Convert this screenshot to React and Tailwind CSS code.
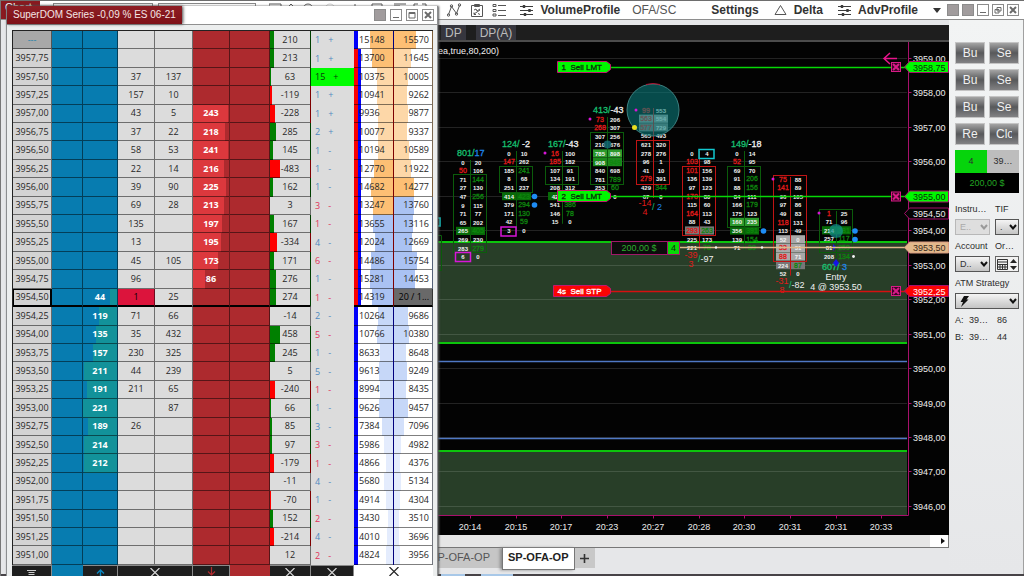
import React from "react";

/* ---------- SuperDOM data ---------- */
// price, bid, last bid, last ask, ask, delta, count, sign, tone, volume, session volume
const rows = [
  ["---", "", "", "", "", 210, "1", "+", "b", 15148, 15570],
  ["3957,75", "", "", "", "", 213, "1", "+", "b", 13700, 11645],
  ["3957,50", "", "37", "137", "", 63, "15", "+", "g", 10375, 10005],
  ["3957,25", "", "157", "10", "", -119, "1", "+", "b", 10941, 9262],
  ["3957,00", "", "43", "5", 243, -228, "1", "+", "b", 9936, 9877],
  ["3956,75", "", "37", "22", 218, 285, "2", "+", "b", 10077, 9337],
  ["3956,50", "", "58", "53", 241, 145, "1", "-", "b", 10194, 10589],
  ["3956,25", "", "22", "14", 216, -483, "1", "-", "b", 12770, 11922],
  ["3956,00", "", "39", "90", 225, 162, "1", "-", "b", 14682, 14277],
  ["3955,75", "", "69", "28", 213, 3, "3", "-", "r", 13247, 13760],
  ["3955,50", "", "135", "", 197, 167, "1", "-", "r", 13655, 13116],
  ["3955,25", "", "13", "", 195, -334, "4", "-", "b", 12024, 12669],
  ["3955,00", "", "45", "105", 173, 171, "6", "-", "r", 14486, 15754],
  ["3954,75", "", "96", "", 86, 276, "1", "-", "b", 15281, 14453],
  ["3954,50", 44, "1", "25", "", 274, "1", "-", "r", 14319, "20 / 1..."],
  ["3954,25", 119, "71", "66", "", -14, "2", "-", "b", 10264, 9686],
  ["3954,00", 135, "35", "432", "", 458, "5", "-", "r", 10766, 10380],
  ["3953,75", 157, "230", "325", "", 245, "1", "-", "b", 8633, 8648],
  ["3953,50", 211, "44", "239", "", 5, "5", "-", "b", 9613, 9249],
  ["3953,25", 191, "211", "65", "", -240, "1", "-", "r", 8994, 8435],
  ["3953,00", 221, "", "87", "", 66, "1", "-", "b", 9626, 9457],
  ["3952,75", 189, "26", "", "", 85, "3", "-", "b", 7384, 7096],
  ["3952,50", 214, "", "", "", 97, "3", "-", "r", 5986, 4982],
  ["3952,25", 212, "", "", "", -179, "1", "-", "r", 4866, 4376],
  ["3952,00", "", "", "", "", -11, "4", "-", "b", 5680, 5134],
  ["3951,75", "", "", "", "", -70, "1", "-", "b", 4914, 4304],
  ["3951,50", "", "", "", "", 152, "2", "-", "r", 3430, 3510],
  ["3951,25", "", "", "", "", -214, "4", "-", "b", 4010, 3696],
  ["3951,00", "", "", "", "", 12, "2", "-", "r", 4824, 3956],
];

const bar = (dir, color, w) =>
  `linear-gradient(to ${dir}, ${color} ${Math.round(w)}px, transparent ${Math.round(w)}px)`;

function tint(v, warm) {
  if (warm) return v > 12000 ? "#fdbf74" : "#fdd7a8";
  if (v > 12000) return "#aac2f3";
  return v > 9000 ? "#c6d7f8" : v > 7000 ? "#d3e0fa" : "#e4ecfd";
}

function stripes(i) {
  if (i === 0 || i > 14) return bar("right", "#0000fa", 4);
  return "linear-gradient(to right, #fa0000 4px, #0000fa 4px, #0000fa 7px, transparent 7px)";
}

function DomRow({ r, i }) {
  const [price, bid, lb, la, ask, delta, n, sign, tone, vol, vol2] = r;
  const last = i === 14;
  const edge = last ? "border-b border-b-black shadow-[inset_0_-1px_0_#000]" : "border-b border-b-black/50";
  const cell = `p-0 text-center border-r border-r-black/50 ${edge}`;
  const toneCls =
    tone === "g" ? "bg-[#00fd00] text-[#0a3a0a]" : tone === "r" ? "text-[#e0335a]" : "text-[#4f8ac0]";
  return (
    <tr>
      <td className={`p-0 text-center border-r border-b ${i === 0 ? "bg-[#a8a8a8] text-[#1d82a8]" : "bg-[#d3d3d3]"} ${last ? "border-black shadow-[inset_0_0_0_1px_#000]" : "border-black/50"}`}>{price}</td>
      <td className={`${cell} bg-[#077cb0]`}></td>
      <td
        className={`${cell} bg-[#077cb0] font-bold text-white`}
        style={{ backgroundImage: bid ? bar("left", "#12929a", bid * 0.155) : undefined }}
      >
        {bid}
      </td>
      <td className={`${cell} ${last ? "bg-[#dc143c] text-black" : ""}`}>{lb}</td>
      <td className={cell}>{la}</td>
      <td
        className={`${cell} bg-[#ad2a2e] font-bold text-white`}
        style={{ backgroundImage: ask ? bar("right", "#dc383d", ask * 0.145) : undefined }}
      >
        {ask}
      </td>
      <td className={`${cell} bg-[#ad2a2e]`}></td>
      <td
        className={cell}
        style={{ backgroundImage: bar("right", delta > 0 ? "#008000" : "#fe0000", Math.abs(delta) * 0.021) }}
      >
        {delta}
      </td>
      <td className={`p-0 ${toneCls}`}>
        <div className="flex gap-2 pl-1">
          <span>{n}</span>
          <span>{sign}</span>
        </div>
      </td>
      <td
        className={`${cell} bg-white pl-[5px] text-left`}
        style={{ backgroundImage: `${stripes(i)}, ${bar("left", tint(vol, i < 10), vol * 0.0015)}` }}
      >
        {vol}
      </td>
      <td
        className={`${cell} pr-[3px] text-right ${last ? "bg-[#696969] text-black" : "bg-white"}`}
        style={{ backgroundImage: last ? undefined : bar("right", tint(vol2, i < 9), vol2 * 0.00143) }}
      >
        {vol2}
      </td>
    </tr>
  );
}

function Cross({ color = "#d8d8d8" }) {
  return (
    <svg width="10" height="10" viewBox="0 0 10 10" className="mt-[2px] shrink-0">
      <path d="M.5 0l9 9M9.500 0l-9 9" stroke={color} strokeWidth="1.2" />
    </svg>
  );
}

function WinButton({ kind, label }) {
  return (
    <button aria-label={label} className={`flex size-3 items-center justify-center border border-[#8c8c8c] ${kind === "fill" ? "bg-[#a19c9d]" : "bg-white"}`}>
      <svg width="10" height="10" viewBox="0 0 10 10" fill="none" stroke="#6b6b6b" className="shrink-0">
        {kind === "min" && <path d="M2 7.500h6" />}
        {kind === "max" && <path d="M2 2.500h6v5.500h-6zM2 3.500h6" />}
        {kind === "restore" && <path d="M4 2.500h4v3.500h-4zM2 4.500h4v3.500h-4z" />}
        {kind === "close" && <path d="M2 2l6 6M8 2l-6 6" strokeWidth="2" />}
      </svg>
    </button>
  );
}

function SuperDom() {
  const foot = "flex justify-center overflow-hidden border-r border-t border-[#8a8a8a] bg-[#1e1e1e]";
  return (
    <section className="absolute bottom-0 left-[5px] top-[6px] flex w-[432px] flex-col border-l border-r border-[#8c8e90] bg-[#eceeee] shadow-[1px_0_2px_#555]">
      <header className="flex h-[19px] items-center border-b border-[#909090] bg-white">
        <h1 className="flex h-full items-center bg-linear-to-b from-[#8e1e24] to-[#7e1017] px-[6px] text-[10px] leading-4 text-[#f4e6e6] shadow-[1px_0_3px_#444]">
          SuperDOM Series -0,09 % ES 06-21
        </h1>
        <div className="ml-auto flex gap-1 pr-[3px]">
          <WinButton kind="fill" label="Link" />
          <WinButton kind="min" label="Minimize" />
          <WinButton kind="max" label="Maximize" />
          <WinButton kind="close" label="Close" />
        </div>
      </header>
      <div className="flex min-h-0 flex-1 flex-col pl-[5px] pr-1 pt-[5px]">
        <div className="min-h-0 flex-1">
          <table className="h-full w-full table-fixed border-separate border-spacing-0 border-l border-t border-[#222] bg-[#dcdcdc] font-['Open_Sans',sans-serif] text-[9px] leading-3 text-[#262626]">
            <colgroup>
              <col className="w-[39px]" />
              <col className="w-[31px]" />
              <col className="w-[35px]" />
              <col className="w-[37px]" />
              <col className="w-[38px]" />
              <col className="w-[37px]" />
              <col className="w-[40px]" />
              <col className="w-[41px]" />
              <col className="w-[43px]" />
              <col className="w-[40px]" />
              <col />
            </colgroup>
            <tbody>
              {rows.map((r, i) => (
                <DomRow key={r[0]} r={r} i={i} />
              ))}
            </tbody>
          </table>
        </div>
        <footer className="grid h-[11px] shrink-0 grid-cols-[40px_31px_35px_75px_37px_40px_41px_43px_1fr]">
          <div className={foot}>
            <svg width="9" height="9" viewBox="0 0 9 9" className="mt-1 shrink-0" stroke="#ccc"><path d="M0 .5h9M1.500 2.500h6M1.500 4.500h6M0 6.500h9" /></svg>
          </div>
          <div className="bg-[#077cb0]"></div>
          <div className={foot}>
            <svg width="9" height="9" viewBox="0 0 9 9" className="mt-[3px] shrink-0" fill="none" stroke="#0a86c0"><path d="M4.500 9V1M1 4.500l3.500-3.500 3.500 3.500" strokeWidth="1.400" /></svg>
          </div>
          <div className={foot}><Cross /></div>
          <div className={foot}>
            <svg width="9" height="9" viewBox="0 0 9 9" className="mt-[1px] shrink-0" fill="none" stroke="#b02a2e"><path d="M4.500 0v8M1 4.500l3.500 3.500 3.500-3.500" strokeWidth="1.200" /></svg>
          </div>
          <div className="bg-[#ad2a2e]"></div>
          <div className={foot}><Cross /></div>
          <div className={foot}><Cross /></div>
          <div className="flex justify-center overflow-hidden bg-white"><Cross color="#222" /></div>
        </footer>
      </div>
    </section>
  );
}

/* ---------- Footprint chart ---------- */
// cell prefixes: r = red, g = green, none = white
const clusters = [
  { x: 470, y: 162, up: true, box: [174, 252], c: ["0 20", "r50 106", "71 g144", "27 130", "47 g256", "9 115", "71 77", "65 202", "265 g405", "269 230", "283 g279", "6 0"], hl: { 8: "#076b07" } },
  { x: 516, y: 153, up: true, box: [166, 192], c: ["0 10", "r147 262", "185 g241", "8 68", "251 237", "414 g423", "379 g294", "171 g130", "42 g59", "3 0"], hl: { 5: "#076b07" } },
  { x: 562, y: 153, up: true, box: [166, 184], c: ["r16 100", "r185 182", "107 91", "134 191", "208 312", "42 ", "541 g386", "146 g78", "15 0"], hl: { 5: "#076b07" } },
  { x: 607, y: 119, up: true, box: [132, 184], c: ["r73 206", "r268 307", "307 256", "210 676", "785 898", "908 g949", "840 698", "781 g789", "253 g60", " 0"], hl: { 4: "#2c9a2c", 5: "#1d8a1d" } },
  { x: 653, y: 110, up: false, box: [140, 184], c: ["r99 553", "r563 554", "r577 729", "565 493", "621 320", "278 276", "96 1", "41 10", "r279 391", "429 g344", "67 0"], hl: { 1: "#9a9a9a", 2: "#777777" } },
  { x: 699, y: 153, up: false, box: [166, 235], c: ["0 4", "r103 98", "r101 156", "136 139", "97 123", "r170 80", "115 60", "r164 113", "88 43", "r293 g263", "225 173", "221 g78"], hl: { 9: "#777777" } },
  { x: 744, y: 153, up: true, box: [166, 227], c: ["0 14", "r52 95", "69 70", "91 g206", "88 g156", "84 111", "166 g179", "175 123", "160 235", "356 g391", "139 g154", "71 g39"], hl: { 8: "#2c9a2c", 9: "#076b07" } },
  { x: 790, y: 179, up: false, box: [175, 261], c: ["r75 88", "r141 89", "96 105", "97 86", "49 83", "r118 131", "113 49", "52 0", "r33 31", "r88 71", "224 g87", "52 0"], hl: { 7: "#a8a8a8", 8: "#a8a8a8", 9: "#a8a8a8", 10: "#777777" } },
  { x: 836, y: 213, up: true, box: [209, 252], c: ["r1 25", "71 96", "214 g381", "257 g117", "81 g259", "208 g134"], hl: { 2: "#076b07" } },
];
const STEP = 8.6;
const inks = { r: "#e01a1a", g: "#0e860e" };

function Num({ x, y, v }) {
  const ink = inks[v[0]];
  return (
    <text x={x} y={y + 2.5} textAnchor="middle" fontSize={ink ? 7 : 6} fontWeight={ink ? 400 : 700} fill={ink || "#f2f2f2"} stroke={ink || "none"} strokeWidth=".3">
      {ink ? v.slice(1) : v}
    </text>
  );
}

function Cluster({ k }) {
  const line = k.up ? "#0b5c0b" : "#c01414";
  return (
    <g>
      {Object.keys(k.hl).map((i) => (
        <rect key={i} x={k.x - 14} y={k.y + i * STEP - 4} width="29" height="8.200" fill={k.hl[i]} />
      ))}
      <path d={`M${k.x + 0.5} ${k.y - 2}V${k.y + (k.c.length - 1) * STEP + 2}`} stroke={line} />
      <rect x={k.x - 16.5} y={k.box[0] + 0.5} width="33" height={k.box[1] - k.box[0]} fill="none" stroke={line} />
      {k.c.map((s, i) => {
        const [a, b] = s.split(" ");
        return (
          <g key={i}>
            {a && <Num x={k.x - 7} y={k.y + i * STEP} v={a} />}
            {b && <Num x={k.x + 8} y={k.y + i * STEP} v={b} />}
          </g>
        );
      })}
    </g>
  );
}

const sums = [
  [457, 153, "801/", "17", "#1e84e8"],
  [502, 144, "124/", " -2", "#f0f0f0"],
  [548, 144, "167/", "-43", "#f0f0f0"],
  [593, 110, "413/", "-43", "#f0f0f0"],
  [731, 144, "149/", "-18", "#f0f0f0"],
  [822, 267, "607/", " 3", "#1e84e8"],
];
const lows = [
  [645, 203, "-14", "4", "/", " 2", "#1e84e8"],
  [691, 255, "-39", "3", "/", "-97", "#f0f0f0"],
  [782, 281, "-31", "8", "/", "-82", "#f0f0f0"],
];

function Tag({ x, y, w, fill, ink, children }) {
  return (
    <g>
      <path d={`M${x} ${y - 5.500}h${w - 4}l4 3v5l-4 3h${4 - w}z`} fill={fill} stroke="#c2186f" />
      <text x={x + 4} y={y + 3} fontSize="8" fill={ink} stroke={ink} strokeWidth=".3" xmlSpace="preserve">{children}</text>
    </g>
  );
}

function Marker({ y, fill, ink, label, edge = "#a8106c" }) {
  return (
    <g>
      <path d={`M904.500 ${y}l5-5.500h39v11h-39z`} fill={fill} stroke={edge} />
      <text x="913" y={y + 3.5} fontSize="9" fill={ink}>{label}</text>
    </g>
  );
}

function CloseMark({ y }) {
  return (
    <g stroke="#d81b86">
      <rect x="891.500" y={y - 4.500} width="9" height="9" fill="#3a0424" />
      <path d={`M893 ${y - 3}l6 6m0-6l-6 6`} strokeWidth="2" />
    </g>
  );
}

function Chart() {
  const prices = Array.from({ length: 14 }, (_, i) => 3959 - i);
  const times = ["20:14", "20:15", "20:17", "20:23", "20:27", "20:28", "20:30", "20:31", "20:31", "20:33"];
  return (
    <svg viewBox="437 42 512 493" preserveAspectRatio="xMaxYMin meet" className="h-full w-full font-['Liberation_Sans',sans-serif]" role="img" aria-label="Order flow chart">
      <rect x="437" y="42" width="512" height="493" fill="#030303" />
      <rect x="437" y="242" width="470" height="101" fill="#283e28" />
      <rect x="437" y="451" width="470" height="64" fill="#283e28" />
      {prices.map((p, i) => (
        <path key={p} d={`M437 ${Math.round(58 + i * 34.45) + 0.5}H907`} stroke="#fff" strokeOpacity=".13" />
      ))}
      <path d="M437 242H907M437 343H907M437 451H907" stroke="#0cc40c" strokeWidth="2" />
      <path d="M437 361.500H907M437 438.500H907" stroke="#4f78c4" strokeWidth="1.500" />
      <path d="M437 235.500h4.500v35h-4.500" fill="none" stroke="#0b5c0b" />
      <path d="M437 218h3v8h-3" fill="none" stroke="#16c4c4" strokeWidth="1.500" />
      <text x="499" y="54" textAnchor="end" fontSize="9" fill="#f0f0f0">area,true,80,200)</text>

      {clusters.map((k) => <Cluster key={k.x} k={k} />)}
      <rect x="455.500" y="252.500" width="15" height="9" fill="none" stroke="#d816d8" strokeWidth="1.500" />
      <rect x="501" y="227" width="15" height="9" fill="none" stroke="#d816d8" strokeWidth="1.500" />
      <rect x="699" y="149.500" width="15" height="9" fill="none" stroke="#12c8d0" strokeWidth="1.500" />
      {sums.map(([x, y, a, b, c]) => (
        <text key={x} x={x} y={y + 3} fontSize="9" fill="#16c070" stroke="#16c070" strokeWidth=".3" xmlSpace="preserve">{a}<tspan fill={c} stroke={c}>{b}</tspan></text>
      ))}
      {lows.map(([x, y, a, b, s, v, c]) => (
        <g key={x} fontSize="9">
          <text x={x} y={y + 3} textAnchor="middle" fill="#e01a1a">{a}</text>
          <text x={x} y={y + 12} textAnchor="middle" fill="#e01a1a">{b}</text>
          <text x={x + 7} y={y + 7} fill="#16c070" xmlSpace="preserve">{s}<tspan fill={c}>{v}</tspan></text>
        </g>
      ))}
      <circle cx="653" cy="110" r="26" fill="#0a8080" fillOpacity=".58" stroke="#3c8080" />
      <path d="M646 84.500q7-2 14 0" stroke="#b01030" fill="none" />
      <circle cx="634.500" cy="127.500" r="2.500" fill="#e8e020" />
      <circle cx="607.500" cy="144.500" r="4" fill="#14707c" fillOpacity=".8" />
      <circle cx="836" cy="231" r="7" fill="#149090" fillOpacity=".7" />
      <g fill="#d816d8">
        <circle cx="545" cy="153" r="1.500" /><circle cx="590" cy="119" r="1.500" /><circle cx="636" cy="110" r="1.500" />
        <circle cx="773" cy="179" r="1.500" /><circle cx="819" cy="213" r="1.500" />
      </g>
      <g fill="#1e8cf4">
        <circle cx="534.500" cy="196.500" r="2.800" /><circle cx="534.500" cy="205" r="2.800" /><circle cx="763.500" cy="231" r="2.800" />
        <circle cx="855" cy="231" r="2.800" /><circle cx="855" cy="239.500" r="2.800" />
      </g>
      <path d="M836 259l3 4-3 4-3-4zM833 244l3 3-3 4z" fill="#1414e8" />

      <path d="M610 67.500H905M610 196.500H905" stroke="#06d806" strokeWidth="1.500" />
      <path d="M610 291.500H905" stroke="#d81010" strokeWidth="1.500" />
      <path d="M680 247.500H905" stroke="#e0b98c" strokeWidth="1.500" />
      <g fill="#f4f4f4"><circle cx="716" cy="247.500" r="1.200" /><circle cx="762" cy="247.500" r="1.200" /><circle cx="853.500" cy="256.500" r="1.400" /></g>

      <Tag x={557.5} y={67} w={53} fill="#00f800" ink="#083008">1  Sell LMT</Tag>
      <Tag x={557.5} y={196} w={53} fill="#00f800" ink="#083008">2  Sell LMT</Tag>
      <Tag x={553.5} y={291} w={57} fill="#fb0404" ink="#ffffff">4s  Sell STP</Tag>
      <rect x="611.500" y="241.500" width="56" height="13" fill="#0c0c0c" stroke="#a01868" />
      <rect x="667.500" y="241.500" width="12" height="13" fill="#08d808" stroke="#a01868" />
      <text x="639" y="251" textAnchor="middle" fontSize="9" fill="#2cae2c">200,00 $</text>
      <text x="673.500" y="251" textAnchor="middle" fontSize="9" fill="#083008">4</text>
      <g fontSize="9" fill="#f2f2f2" textAnchor="middle">
        <text x="836" y="280">Entry</text>
        <text x="836" y="290">4 @ 3953.50</text>
      </g>

      <path d="M908.500 42V515.500M437 515.500H908.500" stroke="#a8106c" />
      {prices.map((p, i) => (
        <g key={p}>
          <path d={`M908.500 ${Math.round(58 + i * 34.45) + 0.5}h3`} stroke="#a8106c" />
          {p !== 3955 && <text x="913" y={Math.round(62 + i * 34.45)} fontSize="9" fill="#ececec">{p},00</text>}
        </g>
      ))}
      {times.map((t, i) => (
        <g key={i}>
          <path d={`M${Math.round(470 + i * 45.7) + 0.5} 515.500v3`} stroke="#a8106c" />
          <text x={Math.round(470 + i * 45.7)} y="530" textAnchor="middle" fontSize="9" fill="#ececec">{t}</text>
        </g>
      ))}
      <path d="M897 58.500H884m6-5.500l-6 5.500 6 5.500" fill="none" stroke="#e8148c" strokeWidth="1.500" />
      <CloseMark y={67} /><CloseMark y={196.5} /><CloseMark y={291} />
      <Marker y={67} fill="#00f800" ink="#083008" label="3958,75" />
      <Marker y={196.5} fill="#00f800" ink="#083008" label="3955,00" />
      <Marker y={213.5} fill="#050505" ink="#ececec" label="3954,50" />
      <Marker y={247.5} fill="#e2b98c" ink="#3a2a18" label="3953,50" edge="#d89a80" />
      <Marker y={291} fill="#fb0404" ink="#ffffff" label="3952,25" />
    </svg>
  );
}

/* ---------- Main window ---------- */
function Sliders() {
  return (
    <svg width="13" height="13" viewBox="0 0 13 13" stroke="#3c3c3c" strokeWidth="1.200" className="shrink-0">
      <path d="M0 2.500h13M0 6.500h13M0 10.500h13" />
      <path d="M4 1v3M9.500 5v3M5 9v3" strokeWidth="2.400" />
    </svg>
  );
}

function Toolbar() {
  const item = "shrink-0 whitespace-nowrap text-[12px] leading-4";
  return (
    <header className="flex h-[20px] shrink-0 items-center justify-end border-b border-t border-b-[#8e8e8e] border-t-[#6e6e6e] bg-white text-[#333]">
      <div className="mr-auto flex h-full gap-[5px] overflow-hidden">
        <span className="mr-2 w-[39px] bg-[#8a1a20] px-1 text-[11px] leading-3 text-white">Chart</span>
        <input aria-label="Instrument" className="mt-[2px] w-[100px] border border-[#888]" />
        <input aria-label="Interval" className="mt-[2px] w-[98px] border border-[#888]" />
        <svg width="165" height="14" viewBox="0 0 165 14" fill="none" stroke="#555" className="ml-2 mt-[2px]">
          <path d="M0 1h12v10H0zM18 5l4-4 4 4M86 12V1M103 1h10v10h-10zM125 1h12M125 3h6M145 6V1h4M157 6V1h-4" />
          <circle cx="39" cy="6" r="5" /><circle cx="61" cy="6" r="5" stroke="#ccc" />
        </svg>
      </div>
      <svg width="60" height="14" viewBox="0 0 60 14" fill="none" stroke="#555" className="shrink-0">
        <path d="M1.500 11.500l3-8 5 7 3-8" />
        <circle cx="1.500" cy="12" r="1.200" /><circle cx="4.500" cy="3" r="1.200" /><circle cx="9.500" cy="11" r="1.200" /><circle cx="12.500" cy="2" r="1.200" />
        <path d="M24.500 2.500h11v11h-11zM27.500 1.500h5v2h-5zM27 7l2-1 1 2 3-2M27 11l6-4M27 9.500v2h2M31 10.500l2 1" />
        <path d="M46 1.500h3v2h-3zM46 6.500h3v2h-3zM46 11h3v2h-3zM51 2.500h8M51 7.500h8M51 12.500h8" />
      </svg>
      <div className="ml-[13px] flex items-center gap-[7px]"><Sliders /><button className={`${item} font-bold`}>VolumeProfile</button></div>
      <button className={`${item} ml-3 text-[#555]`}>OFA/SC</button>
      <button className={`${item} ml-[35px] font-bold`}>Settings</button>
      <div className="ml-[15px] flex items-center gap-[7px]">
        <svg width="13" height="12" viewBox="0 0 13 12" fill="none" stroke="#555"><path d="M6.500 1.500l5.500 9H1z" /></svg>
        <button className={`${item} font-bold`}>Delta</button>
      </div>
      <div className="ml-[15px] flex items-center gap-[7px]"><Sliders /><button className={`${item} font-bold`}>AdvProfile</button></div>
      <svg width="8" height="5" viewBox="0 0 8 5" className="ml-[15px] shrink-0"><path d="M0 0h8l-4 5z" fill="#333" /></svg>
      <div className="ml-[6px] mr-[5px] flex shrink-0 gap-[3px]">
        <WinButton kind="fill" label="Link instrument" />
        <WinButton kind="fill" label="Link interval" />
        <WinButton kind="min" label="Minimize window" />
        <WinButton kind="restore" label="Restore window" />
        <WinButton kind="close" label="Close window" />
      </div>
    </header>
  );
}

function Pick({ id, value, muted, children }) {
  return (
    <div className="relative">
      <select id={id} disabled={muted} defaultValue={value} className={`block h-4 w-full appearance-none border pl-1 text-[9px] leading-3 ${muted ? "border-[#b8b8b8] bg-[#dedede] text-[#aaa]" : "border-[#555] bg-linear-to-b from-[#f4f4f4] to-[#c4c4c4] text-[#333]"}`}>
        <option>{value}</option>
      </select>
      {children}
      <svg width="8" height="6" viewBox="0 0 8 6" fill="none" stroke={muted ? "#999" : "#111"} strokeWidth="2" className="pointer-events-none absolute right-[2px] top-[5px]">
        <path d="M1 1l3 3.500 3-3.500" />
      </svg>
    </div>
  );
}

function TraderPanel() {
  const keys = ["Bu", "Se", "Bu", "Se", "Bu", "Se", "Re", "Clo"];
  const label = "mb-1 block leading-3";
  return (
    <aside className="w-[75px] shrink-0 border-r border-[#a0a0a0] bg-linear-to-b from-[#f2f4f4] to-[#e6e7e9] pl-[6px] pr-1 pt-[22px] text-[9px] leading-[11px] text-[#2c2c2c]">
      <div className="grid grid-cols-2 gap-x-1 gap-y-[5px]">
        {keys.map((k, i) => (
          <button key={i} className="h-[22px] overflow-hidden whitespace-nowrap border border-[#c4c4c4] bg-linear-to-b from-[#a4a4a4] via-[#58595b] to-[#828284] px-[6px] text-[12px] leading-5 text-[#f0f0f0]">
            <span className="block overflow-hidden">{k}</span>
          </button>
        ))}
      </div>
      <div className="mt-[5px] grid grid-cols-2 text-center">
        <div className="bg-[#06d40c] py-[6px]">4</div>
        <div className="bg-[#bdbdbd] py-[6px]">39…</div>
        <div className="col-span-2 bg-black py-1 text-[9px] leading-3 text-[#22a422]">200,00 $</div>
      </div>
      <div className="mt-[10px] grid grid-cols-[35px_1fr] gap-x-[5px] gap-y-[5px]">
        <div>
          <label className={label} htmlFor="instrument">Instru…</label>
          <Pick id="instrument" value="E.." muted />
        </div>
        <div>
          <label className={label} htmlFor="tif">TIF</label>
          <Pick id="tif" value="." />
        </div>
        <div>
          <label className={label} htmlFor="account">Account</label>
          <Pick id="account" value="D.." />
        </div>
        <div>
          <label className={label} htmlFor="qty">Or…</label>
          <button id="qty" className="flex h-4 w-full items-center justify-between border border-[#666] bg-[#f2f2f2] px-[1px]">
            <svg width="11" height="11" viewBox="0 0 11 11" fill="none" stroke="#333"><path d="M.5.5h10v10H.5zM1 3h9M3 5v5M5.500 5v5M8 5v5M1 5.500h9M1 8h9" /></svg>
            <svg width="7" height="11" viewBox="0 0 7 11"><path d="M0 4l3.500-4L7 4zM0 7h7l-3.500 4z" fill="#222" /></svg>
          </button>
        </div>
      </div>
      <div className="mt-[5px]">
        <label className={label} htmlFor="atm">ATM Strategy</label>
        <Pick id="atm" value="">
          <svg width="9" height="11" viewBox="0 0 9 11" className="pointer-events-none absolute left-[5px] top-[3px]"><path d="M4 0h5L6.500 3.500H8.500L1 11l2-5H.5z" fill="#111" /></svg>
        </Pick>
      </div>
      <dl className="mt-[6px] grid grid-cols-[14px_28px_1fr] gap-y-[6px]">
        <dt>A:</dt><dd>39…</dd><dd>86</dd>
        <dt>B:</dt><dd>39…</dd><dd>44</dd>
      </dl>
    </aside>
  );
}

export default function App() {
  return (
    <div className="relative flex h-screen flex-col overflow-hidden border-l border-[#777] bg-[#e6e7e9] font-['Liberation_Sans',sans-serif]">
      <Toolbar />
      <main className="flex min-h-0 flex-1">
        <div className="flex min-w-0 flex-1 flex-col pl-[436px] pt-[5px]">
          <nav className="flex h-[17px] shrink-0 gap-[10px] border-b-2 border-[#4c4c4c] bg-[#1e1e1e] pl-1 text-[12px] leading-4 text-[#bcbcbc]">
            <button className="bg-[#36363e] px-1">DP</button>
            <button className="bg-[#36363e] px-1">DP(A)</button>
          </nav>
          <div className="min-h-0 flex-1 bg-[#030303]"><Chart /></div>
          <div className="flex h-[13px] shrink-0 items-center justify-end border-b border-r border-[#777] bg-[#e6e6e6]">
            <span className="h-full w-2 bg-white"></span>
            <button aria-label="Scroll right" className="flex h-full w-[10px] items-center justify-center bg-white">
              <svg width="4" height="6" viewBox="0 0 4 6"><path d="M0 0l4 3-4 3z" fill="#111" /></svg>
            </button>
          </div>
          <nav className="flex h-[26px] shrink-0 items-start text-[11px] leading-[19px] text-[#555]">
            <button className="flex h-5 w-[65px] justify-end overflow-hidden whitespace-nowrap bg-[#c6c6c6] pr-3">SP-OFA-OP</button>
            <button className="flex h-[22px] border border-t-0 border-[#777] bg-white px-[5px] font-bold text-[#222] shadow-[-2px_0_3px_#888]">SP-OFA-OP</button>
            <button aria-label="Add tab" className="flex h-5 w-5 items-center justify-center bg-[#c8c8c8]">
              <svg width="9" height="9" viewBox="0 0 9 9" stroke="#333" strokeWidth="1.600"><path d="M0 4.500h9M4.500 0v9" /></svg>
            </button>
          </nav>
        </div>
        <TraderPanel />
      </main>
      <div className="flex h-[2px] shrink-0 bg-[#474347]">
        <span className="ml-[440px] w-6 bg-[#a8c8e8]"></span>
        <span className="ml-4 w-8 bg-[#a8c8e8]"></span>
      </div>
      <SuperDom />
    </div>
  );
}
